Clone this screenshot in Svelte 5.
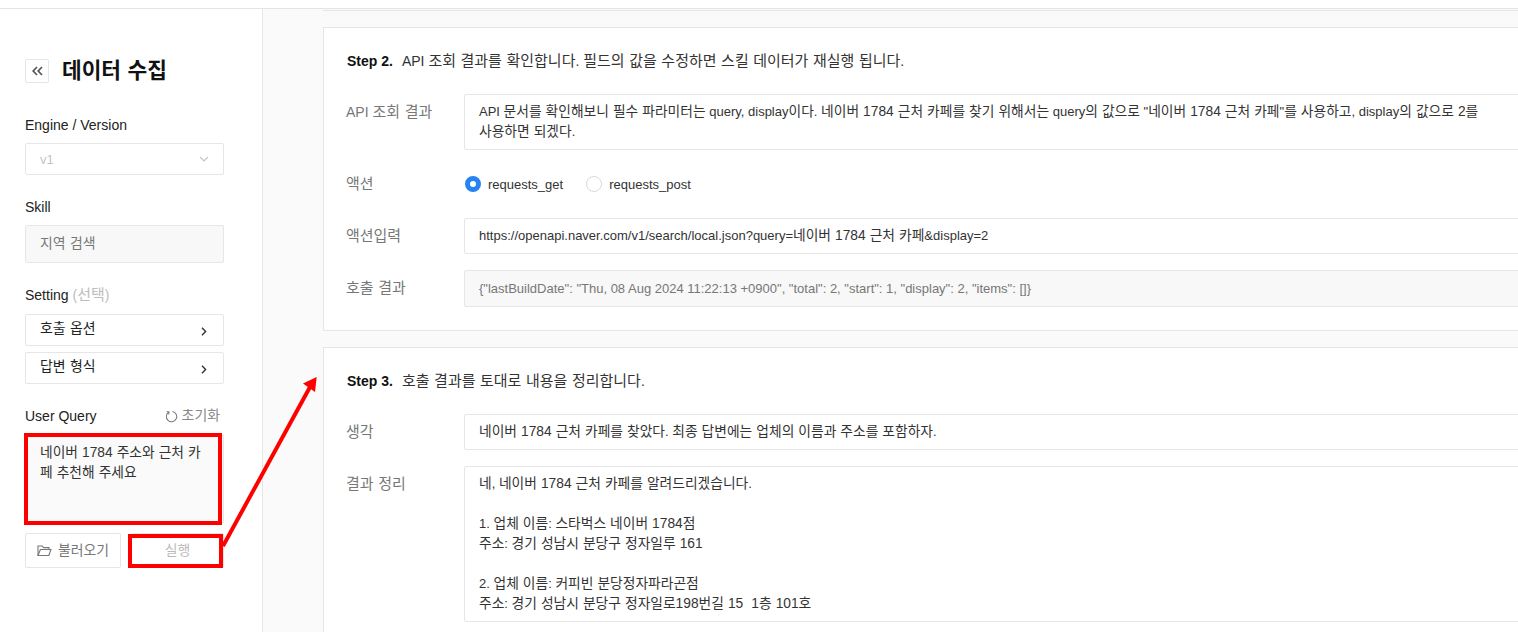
<script>
  const summaryLines = [
    "네, 네이버 1784 근처 카페를 알려드리겠습니다.",
    "",
    "1. 업체 이름: 스타벅스 네이버 1784점",
    "주소: 경기 성남시 분당구 정자일루 161",
    "",
    "2. 업체 이름: 커피빈 분당정자파라곤점",
    "주소: 경기 성남시 분당구 정자일로198번길 15  1층 101호"
  ];

  // hangul runs are set a bit larger than the latin text around them
  function runs(text) {
    return text.split(/([\uAC00-\uD7A3]+(?: +[\uAC00-\uD7A30-9]+)*)/).filter(Boolean).map((s) => ({
      s,
      ko: /[\uAC00-\uD7A3]/.test(s)
    }));
  }
</script>

{#snippet t(text)}{#each runs(text) as r}{#if r.ko}<span class="ko">{r.s}</span>{:else}{r.s}{/if}{/each}{/snippet}

<div class="page">
  <div class="topbar"></div>
  <div class="body">
    <aside class="side">
      <div class="head">
        <button class="back" aria-label="back">
          <svg width="11" height="10" viewBox="0 0 11 10" fill="none" stroke="#555" stroke-width="1.7">
            <path d="M5 1 L1.2 5 L5 9" />
            <path d="M10 1 L6.2 5 L10 9" />
          </svg>
        </button>
        <h1>{@render t("데이터 수집")}</h1>
      </div>

      <div class="label first">Engine / Version</div>
      <div class="select">
        <span>v1</span>
        <svg width="10" height="6" viewBox="0 0 10 6" fill="none" stroke="#c4c4c4" stroke-width="1.1"><path d="M1 1 L5 5 L9 1" /></svg>
      </div>

      <div class="label">Skill</div>
      <div class="readonly">{@render t("지역 검색")}</div>

      <div class="label setting">Setting <span class="muted">({@render t("선택")})</span></div>
      <div class="opt">
        <span class="opt-text">{@render t("호출 옵션")}</span>
        <svg width="6" height="9" viewBox="0 0 6 9" fill="none" stroke="#333" stroke-width="1.4"><path d="M1 .8 L4.6 4.5 L1 8.2" /></svg>
      </div>
      <div class="opt second">
        <span class="opt-text">{@render t("답변 형식")}</span>
        <svg width="6" height="9" viewBox="0 0 6 9" fill="none" stroke="#333" stroke-width="1.4"><path d="M1 .8 L4.6 4.5 L1 8.2" /></svg>
      </div>

      <div class="label query">
        <span>User Query</span>
        <span class="reset">
          <svg width="13" height="13" viewBox="0 0 14 14" fill="none" stroke="#777" stroke-width="1.1">
            <path d="M4.2 2.2 A5.6 5.6 0 1 0 8 1.5" />
            <path d="M1.8 1.6 L4.4 2.2 L3.8 4.8" />
          </svg>
          {@render t("초기화")}
        </span>
      </div>
      <div class="textarea">{@render t("네이버 1784 주소와 근처 카페 추천해 주세요")}</div>

      <div class="actions">
        <button class="load">
          <svg width="15" height="13" viewBox="0 0 15 13" fill="none" stroke="#777" stroke-width="1.1">
            <path d="M1 11.5 V2 H5.2 L6.6 3.6 H12 V5.5" />
            <path d="M1 11.5 L3.4 5.5 H14 L11.8 11.5 Z" />
          </svg>
          {@render t("불러오기")}
        </button>
        <button class="run">{@render t("실행")}</button>
      </div>
    </aside>

    <main class="main">
      <div class="prev"></div>

      <section class="card">
        <p class="step"><b>Step 2.</b>{@render t("API 조회 결과를 확인합니다. 필드의 값을 수정하면 스킬 데이터가 재실행 됩니다.")}</p>
        <div class="row">
          <div class="name">{@render t("API 조회 결과")}</div>
          <div class="field">{@render t('API 문서를 확인해보니 필수 파라미터는 query, display이다. 네이버 1784 근처 카페를 찾기 위해서는 query의 값으로 "네이버 1784 근처 카페"를 사용하고, display의 값으로 2를')}<br />{@render t("사용하면 되겠다.")}</div>
        </div>
        <div class="row radios">
          <div class="name">{@render t("액션")}</div>
          <label class="radio"><span class="dot on"></span>requests_get</label>
          <label class="radio"><span class="dot"></span>requests_post</label>
        </div>
        <div class="row">
          <div class="name">{@render t("액션입력")}</div>
          <div class="field">{@render t("https://openapi.naver.com/v1/search/local.json?query=네이버 1784 근처 카페&display=2")}</div>
        </div>
        <div class="row">
          <div class="name">{@render t("호출 결과")}</div>
          <div class="field filled">{`{"lastBuildDate": "Thu, 08 Aug 2024 11:22:13 +0900", "total": 2, "start": 1, "display": 2, "items": []}`}</div>
        </div>
      </section>

      <section class="card">
        <p class="step"><b>Step 3.</b>{@render t("호출 결과를 토대로 내용을 정리합니다.")}</p>
        <div class="row">
          <div class="name">{@render t("생각")}</div>
          <div class="field">{@render t("네이버 1784 근처 카페를 찾았다. 최종 답변에는 업체의 이름과 주소를 포함하자.")}</div>
        </div>
        <div class="row">
          <div class="name">{@render t("결과 정리")}</div>
          <div class="field summary">
            {#each summaryLines as line}
              <div class="line">{@render t(line)}</div>
            {/each}
          </div>
        </div>
      </section>
    </main>
  </div>

  <div class="mark mark-query"></div>
  <div class="mark mark-run"></div>
  <svg class="arrow" width="110" height="190" viewBox="0 0 110 190" fill="none">
    <path d="M1 169 L88 10" stroke="#ff0000" stroke-width="4" />
    <path d="M94.7 0 L81 6.5 L93 15 Z" fill="#ff0000" />
  </svg>
</div>

<style>
  :global(body) {
    margin: 0;
    overflow: hidden;
  }
  .page {
    position: relative;
    width: 1518px;
    height: 632px;
    overflow: hidden;
    background: #fff;
    font-family: "Liberation Sans", "Noto Sans CJK KR", sans-serif;
    font-size: 14px;
    color: #222;
  }
  .ko {
    font-size: 1.07em;
    line-height: 1;
    word-spacing: 0.5px;
  }
  .field .ko,
  .textarea .ko {
    font-size: 1.06em;
    word-spacing: 0.2px;
  }
  .topbar {
    height: 8px;
    border-bottom: 1px solid #e4e4e4;
  }
  .body {
    display: flex;
    height: 623px;
  }
  .side {
    box-sizing: border-box;
    width: 263px;
    flex: none;
    padding: 50px 38px 0 25px;
    border-right: 1px solid #e6e6e6;
  }
  .head {
    display: flex;
    align-items: center;
    gap: 13px;
    height: 24px;
  }
  .back {
    display: flex;
    align-items: center;
    justify-content: center;
    box-sizing: border-box;
    width: 24px;
    height: 24px;
    padding: 0;
    background: #fff;
    border: 1px solid #e6e6e6;
    border-radius: 2px;
  }
  h1 {
    margin: 0;
    font-size: 20px;
    line-height: 24px;
    font-weight: 700;
    color: #111;
  }
  .label {
    height: 18px;
    line-height: 18px;
    margin-top: 23px;
    margin-bottom: 9px;
  }
  .label.first {
    margin-top: 33px;
  }
  .label.setting {
    margin-bottom: 10px;
  }
  .muted {
    color: #bdbdbd;
  }
  .select,
  .opt {
    box-sizing: border-box;
    display: flex;
    align-items: center;
    justify-content: space-between;
    height: 32px;
    padding: 0 14px;
    border: 1px solid #e6e6e6;
    border-radius: 2px;
    font-size: 13px;
  }
  .select {
    color: #c4c4c4;
  }
  .opt {
    padding-right: 16px;
  }
  .opt-text {
    margin-bottom: 3px;
  }
  .opt svg {
    margin-top: 2px;
  }
  .readonly {
    box-sizing: border-box;
    height: 38px;
    line-height: 35px;
    padding: 0 14px;
    background: #f8f8f8;
    border: 1px solid #e6e6e6;
    border-radius: 2px;
    font-size: 13px;
    color: #777;
  }
  .opt.second {
    margin-top: 6px;
  }
  .label.query {
    display: flex;
    justify-content: space-between;
    margin-top: 23px;
    margin-bottom: 10px;
  }
  .reset {
    display: flex;
    align-items: center;
    gap: 4px;
    font-size: 13px;
    color: #888;
    margin-right: 4px;
  }
  .textarea {
    box-sizing: border-box;
    height: 88px;
    padding: 7px 14px;
    background: #fafafa;
    border: 1px solid #e6e6e6;
    font-size: 13px;
    line-height: 20px;
    color: #333;
  }
  .actions {
    display: flex;
    justify-content: space-between;
    margin-top: 10px;
  }
  .actions button {
    box-sizing: border-box;
    height: 35px;
    background: #fff;
    border: 1px solid #e6e6e6;
    border-radius: 2px;
    font-family: inherit;
    font-size: 13px;
  }
  .load {
    display: flex;
    align-items: center;
    justify-content: center;
    gap: 6px;
    width: 96px;
    padding: 0;
    color: #777;
  }
  .run {
    width: 93px;
    color: #bbb;
  }
  .main {
    flex: 1;
    min-width: 0;
    padding-left: 60px;
    background: #fafafa;
  }
  .prev {
    width: 1300px;
    height: 1px;
    margin: 1px 0 16px;
    background: #e6e6e6;
  }
  .card {
    box-sizing: border-box;
    width: 1300px;
    margin-bottom: 16px;
    padding: 23px 22px 23px;
    background: #fff;
    border: 1px solid #e6e6e6;
  }
  .step {
    margin: 0 0 23px;
    padding-left: 1px;
    line-height: 20px;
    font-size: 14px;
    color: #333;
  }
  .step b {
    margin-right: 9px;
    color: #111;
  }
  .row {
    display: flex;
    margin-bottom: 16px;
  }
  .row:last-child {
    margin-bottom: 0;
  }
  .name {
    flex: none;
    width: 118px;
    padding-top: 8px;
    font-size: 14px;
    line-height: 20px;
    color: #777;
  }
  .field {
    box-sizing: border-box;
    flex: 1;
    padding: 7px 14px;
    border: 1px solid #e6e6e6;
    border-radius: 2px;
    font-size: 13px;
    line-height: 20px;
    color: #333;
  }
  .field.filled {
    background: #f8f8f8;
    color: #777;
    padding: 8px 14px 7px;
  }
  .line {
    min-height: 20px;
    white-space: pre-wrap;
  }
  .radios {
    align-items: center;
    height: 36px;
  }
  .radios .name {
    width: 119px;
    padding-top: 0;
  }
  .radio {
    display: flex;
    align-items: center;
    gap: 7px;
    margin-right: 23px;
    font-size: 13px;
    color: #333;
  }
  .dot {
    box-sizing: border-box;
    width: 16px;
    height: 16px;
    border: 1px solid #d9d9d9;
    border-radius: 50%;
    background: #fff;
  }
  .dot.on {
    border: 5px solid #2684f0;
  }
  .mark {
    position: absolute;
    box-sizing: border-box;
    border: 4px solid #ff0000;
  }
  .mark-query {
    left: 24px;
    top: 433px;
    width: 198px;
    height: 92px;
  }
  .mark-run {
    left: 128px;
    top: 534px;
    width: 95px;
    height: 34px;
  }
  .arrow {
    position: absolute;
    left: 222px;
    top: 377px;
  }
</style>
